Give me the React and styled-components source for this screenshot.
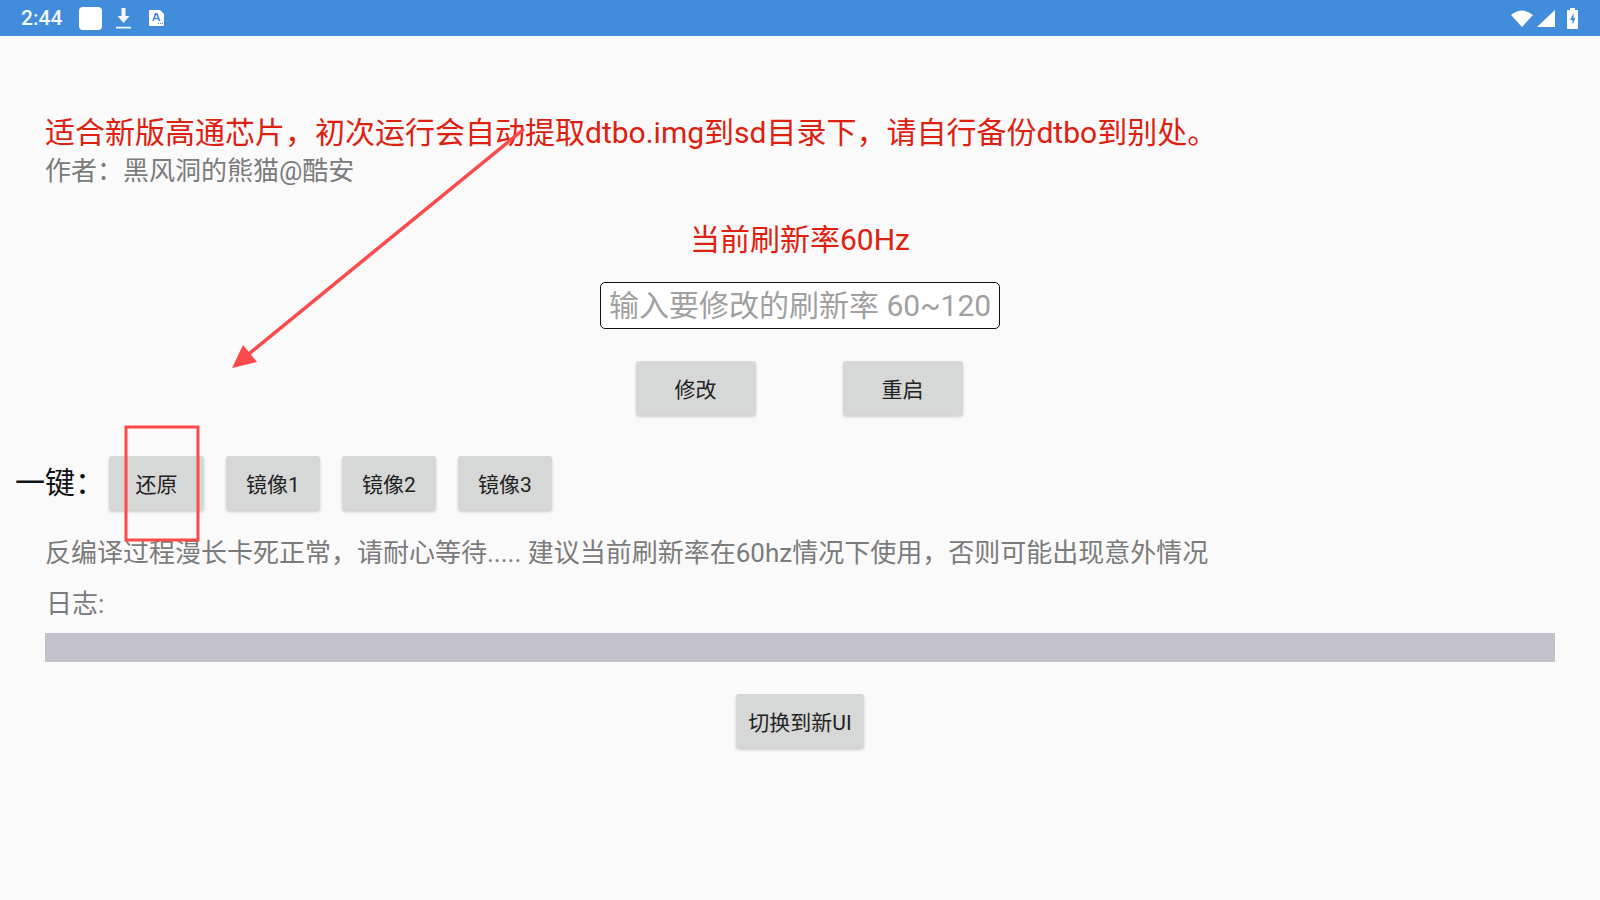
import React from "react";
import styled, { createGlobalStyle } from "styled-components";

const Global = createGlobalStyle`
  html, body { margin: 0; padding: 0; background: #fafafa; }
  body { font-family: Roboto, "Noto Sans CJK SC", sans-serif; overflow: hidden; }
`;
const Screen = styled.div`
  position: relative; width: 1600px; height: 900px; background: #fafafa; overflow: hidden;
  display: flex; flex-direction: column;
`;
const StatusBar = styled.div`
  height: 36px; background: #418cdb; display: flex; align-items: center;
  padding: 0 22px 0 21px; color: #fff; flex: none;
`;
const Time = styled.span`font-size: 21px; font-weight: 500; width: 58px; color: #f4f8fd;`;
const StatusLeft = styled.div`display: flex; align-items: center; gap: 14px; & > svg:last-child { margin-left: 4px; }`;
const StatusRight = styled.div`margin-left: auto; display: flex; align-items: center; gap: 4px; & > svg:last-child { margin-left: 8px; }`;
const Content = styled.div`display: flex; flex-direction: column; flex: 1; padding-top: 77px;`;
const Notice = styled.div`
  margin-left: 45px; font-size: 30px; line-height: 40px; color: #dd2010; white-space: nowrap;
`;
const Author = styled.div`
  margin-left: 45px; font-size: 26px; line-height: 36px; color: #7b7b7b; white-space: nowrap;
`;
const Rate = styled.div`
  margin-top: 29px; text-align: center; font-size: 30px; line-height: 44px; color: #dd2010;
`;
const RateInput = styled.input`
  align-self: center; box-sizing: border-box; margin-top: 20px; width: 400px; height: 47px;
  padding: 0 8px 0 8px; border: 1.5px solid #111; border-radius: 5px; background: #fff;
  font: 30px Roboto, "Noto Sans CJK SC", sans-serif; outline: none;
  &::placeholder { color: #a0a0a0; opacity: 1; }
`;
const Actions = styled.div`
  margin-top: 32px; padding-right: 2px; display: flex; justify-content: center; gap: 87px;
`;
const Button = styled.button`
  box-sizing: border-box; width: ${p => p.$w}px; height: 54px; padding: 0; border: 0; border-radius: 3px;
  background: #d6d7d7; color: #222; font: 21px Roboto, "Noto Sans CJK SC", sans-serif;
  box-shadow: 0 2px 3px rgba(0,0,0,.18);
`;
const OneKey = styled.div`
  margin-top: 41px; display: flex; align-items: center; padding-left: 15px;
`;
const OneKeyLabel = styled.span`width: 94px; font-size: 30px; color: #111; position: relative; top: -3px;`;
const MirrorGroup = styled.div`display: flex; gap: 22px;`;
const Hint = styled.div`
  margin: 18px 0 0 45px; font-size: 26px; line-height: 50px; color: #7b7b7b; white-space: nowrap;
`;
const LogLabel = styled.div`
  margin: 1px 0 0 46px; font-size: 26px; line-height: 50px; color: #7b7b7b;
`;
const LogBar = styled.div`margin: 4px 45px 0; height: 29px; background: #c3c2ca;`;
const SwitchRow = styled.div`margin-top: 32px; display: flex; justify-content: center;`;
const Overlay = styled.svg`position: absolute; left: 0; top: 0; pointer-events: none;`;

export default function App() {
  return (
    <Screen>
      <Global />
      <StatusBar>
        <Time>2:44</Time>
        <StatusLeft>
          <svg width="23" height="23" viewBox="0 0 23 23"><rect x="0" y="0" width="23" height="23" rx="4" fill="#fff" /></svg>
          <svg width="15" height="21" viewBox="0 0 15 21" fill="#f4f8fd"><path d="M5.500 0h4v8h4l-6 7-6-7h4zM0 18.800h15v1.700H0z" /></svg>
          <svg width="15" height="16" viewBox="0 0 15 16"><path fill="#fff" d="M1 0h10l4 4v11a1 1 0 0 1-1 1H1a1 1 0 0 1-1-1V1a1 1 0 0 1 1-1z" /><path fill="#418cdb" d="M6 3h2.500l3 8H9.700l-.6-1.800H5.500L4.900 11H3.200zM6 7.800h2.500L7.300 4.500zM9 13h1v1H9zM11 13h1v1h-1zM13 13h1v1h-1z" /></svg>
        </StatusLeft>
        <StatusRight>
          <svg width="22" height="17" viewBox="0 0 22 17"><path fill="#fff" d="M0 5 Q11 -4 22 5 L11 17Z" /></svg>
          <svg width="18" height="17" viewBox="0 0 18 17"><path fill="#fff" d="M0 17 L18 0 V17Z" /></svg>
          <svg width="11" height="21" viewBox="0 0 11 21"><path fill="#fff" d="M3 0h5v2h3v19H0V2h3z" /><path fill="#418cdb" d="M6.500 5 3 12h2.500v5L8.500 10H6.500z" /></svg>
        </StatusRight>
      </StatusBar>
      <Content>
        <Notice>适合新版高通芯片，初次运行会自动提取dtbo.img到sd目录下，请自行备份dtbo到别处。</Notice>
        <Author>作者：黑风洞的熊猫@酷安</Author>
        <Rate>当前刷新率60Hz</Rate>
        <RateInput placeholder="输入要修改的刷新率 60~120" />
        <Actions>
          <Button $w={120}>修改</Button>
          <Button $w={120}>重启</Button>
        </Actions>
        <OneKey>
          <OneKeyLabel>一键：</OneKeyLabel>
          <MirrorGroup>
            <Button $w={95}>还原</Button>
            <Button $w={94}>镜像1</Button>
            <Button $w={94}>镜像2</Button>
            <Button $w={94}>镜像3</Button>
          </MirrorGroup>
        </OneKey>
        <Hint>反编译过程漫长卡死正常，请耐心等待..... 建议当前刷新率在60hz情况下使用，否则可能出现意外情况</Hint>
        <LogLabel>日志:</LogLabel>
        <LogBar />
        <SwitchRow>
          <Button $w={128}>切换到新UI</Button>
        </SwitchRow>
      </Content>
      <Overlay width="1600" height="900" viewBox="0 0 1600 900">
        <rect x="126" y="427" width="72" height="113" fill="none" stroke="#fb4a4c" strokeWidth="3" />
        <line x1="524" y1="129" x2="245" y2="357" stroke="#fb4a4c" strokeWidth="3.500" />
        <polygon points="232,368 243,345 257,362" fill="#fb4a4c" />
      </Overlay>
    </Screen>
  );
}
